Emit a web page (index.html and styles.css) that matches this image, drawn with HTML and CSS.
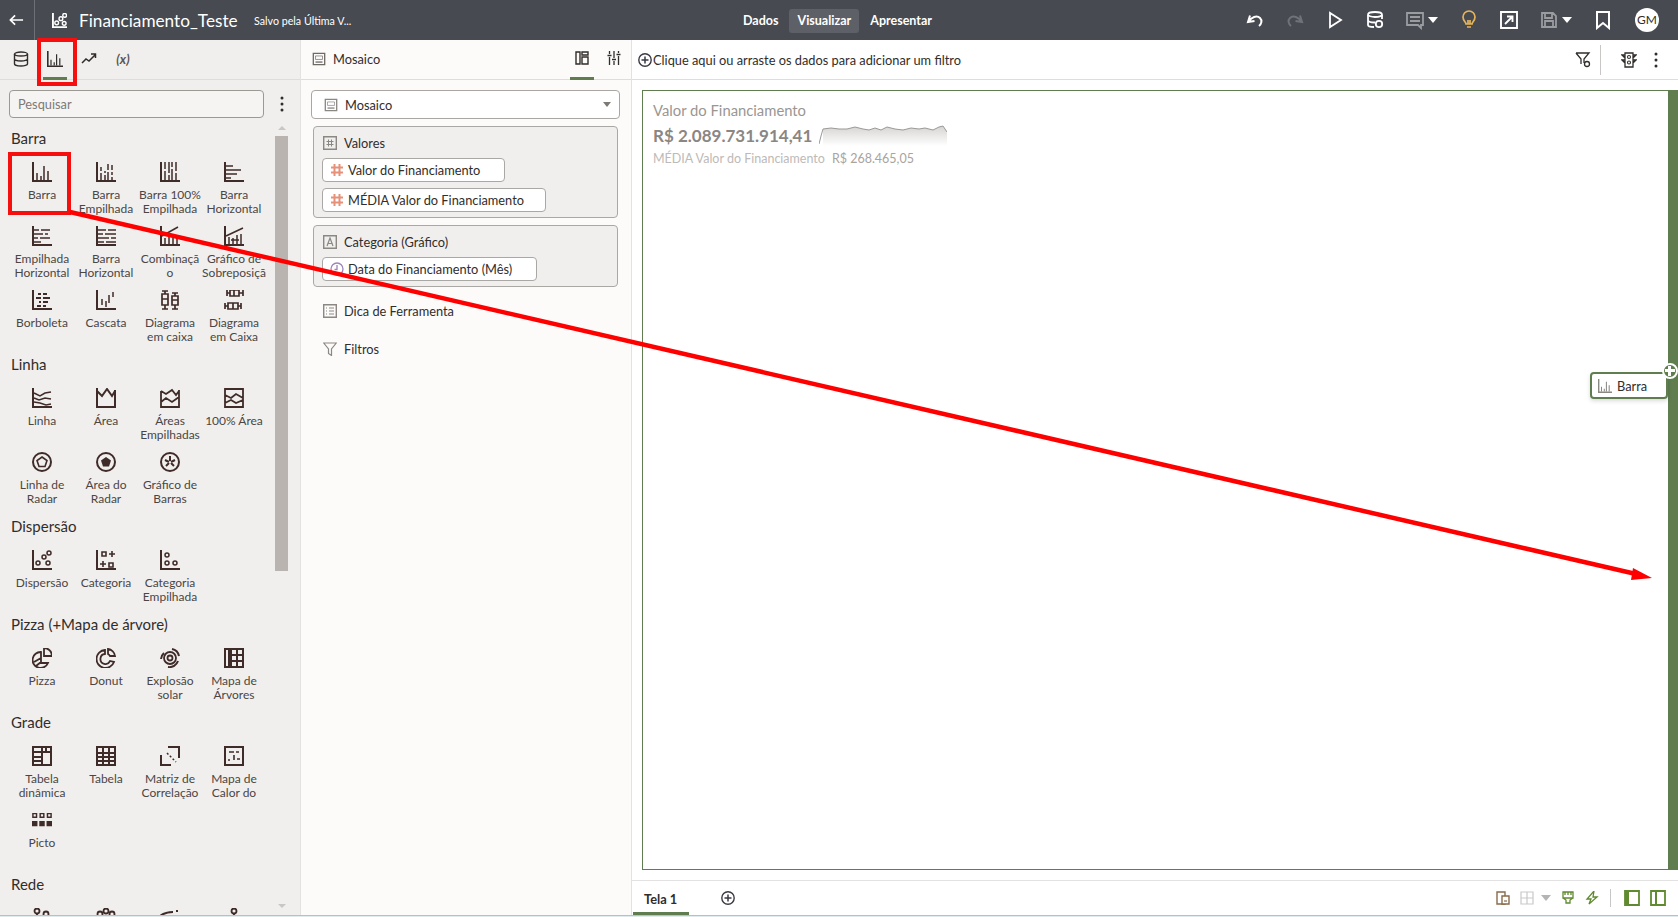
FILE: index.html
```html
<!DOCTYPE html>
<html lang="pt">
<head>
    <meta charset="UTF-8">
    <title>Financiamento_Teste</title>
    <link rel="stylesheet" href="styles.css">
</head>
<body>
<svg class="defs" width="0" height="0">
    <symbol id="i-bar" viewBox="0 0 20 20"><path d="M1 0v19h19" stroke-width="2"/><path d="M5 11v7M9 14v4M12 4v14M16 9v9" stroke-width="1.5"/></symbol>
    <symbol id="i-barstack" viewBox="0 0 20 20"><path d="M1 0v19h19" stroke-width="2"/><path d="M5 5v4M5 11v7M9 9v2M9 13v5M12 2v6M12 10v8M16 3v5M16 10v3M16 15v3" stroke-width="1.5"/></symbol>
    <symbol id="i-bar100" viewBox="0 0 20 20"><path d="M1 0v19h19" stroke-width="2"/><path d="M5 0v7M5 9v9M9 0v11M9 13v5M12 0v5M12 7v11M16 0v9M16 11v7" stroke-width="1.5"/></symbol>
    <symbol id="i-hbar" viewBox="0 0 20 20"><path d="M1 0v19h19" stroke-width="2"/><path d="M2 4h7M2 8h15M2 12h11M2 16h5" stroke-width="1.5"/></symbol>
    <symbol id="i-hstack" viewBox="0 0 20 20"><path d="M1 0v19h19" stroke-width="2"/><path d="M2 4h5M9 4h9M2 8h9M13 8h3M2 12h4M8 12h10M2 16h7" stroke-width="1.5"/></symbol>
    <symbol id="i-hstack2" viewBox="0 0 20 20"><path d="M1 0v19h19" stroke-width="2"/><path d="M2 4h8M12 4h8M2 8h5M9 8h11M2 12h11M15 12h5M2 16h6M10 16h10" stroke-width="1.5"/></symbol>
    <symbol id="i-combo" viewBox="0 0 20 20"><path d="M1 0v19h19" stroke-width="2"/><path d="M5 12v6M9 10v8M13 12v6M17 9v9" stroke-width="1.5"/><path d="M2 10 18 1" stroke-width="1.5"/></symbol>
    <symbol id="i-overlay" viewBox="0 0 20 20"><path d="M1 0v19h19" stroke-width="2"/><path d="M5 11v7M9 12v6M13 9v9M17 8v10M7 14h8" stroke-width="1.5"/><path d="M2 10 19 2" stroke-width="1.5"/></symbol>
    <symbol id="i-butterfly" viewBox="0 0 20 20"><path d="M1 0v19h19" stroke-width="2"/><path d="M6 4h3M11 4h4M4 8h5M11 8h7M7 12h2M11 12h5M5 16h4M11 16h3" stroke-width="1.8"/></symbol>
    <symbol id="i-waterfall" viewBox="0 0 20 20"><path d="M1 0v19h19" stroke-width="2"/><path d="M6 9v6M10 11v6M13 5v8M17 2v5" stroke-width="1.5"/></symbol>
    <symbol id="i-box" viewBox="0 0 20 20"><path d="M2 1h6M5 1v3M2 4h6v11H2zM2 9h6M2 19h6M5 15v4M12 3h6M15 3v3M12 6h6v9h-6zM12 10h6M12 19h6M15 15v4" stroke-width="1.7"/></symbol>
    <symbol id="i-hbox" viewBox="0 0 20 20"><path d="M3 0v6M3 3h3M6 0h9v6H6zM10 0v6M15 3h4M19 0v6M1 13v6M1 16h3M4 13h10v6H4zM9 13v6M14 16h3M17 13v6" stroke-width="1.7"/></symbol>
    <symbol id="i-line" viewBox="0 0 20 20"><path d="M1 0v19h19" stroke-width="2"/><path d="M2 5l6 3 5-3 6-1M2 10l5 2 6-2 6 1M2 14l6 1 6 2 5-1" stroke-width="1.5"/></symbol>
    <symbol id="i-area" viewBox="0 0 20 20"><path d="M1 0v19h18V2M1 3l5 5 5-7 5 7 3-5" stroke-width="2"/></symbol>
    <symbol id="i-areas" viewBox="0 0 20 20"><path d="M1 3v16h18V2M1 3l5 3 6-4 4 5 3-4M1 14l5-4 6 4 7-5" stroke-width="1.8"/></symbol>
    <symbol id="i-area100" viewBox="0 0 20 20"><path d="M1 1h18v18H1zM1 7l6 3 5-4 7 4M1 15l6-3 5 3 7-3" stroke-width="1.8"/></symbol>
    <symbol id="i-radar" viewBox="0 0 20 20"><circle cx="10" cy="10" r="9" stroke-width="2"/><path d="M10 5l5 3.6-2 5.9H7L5 8.600z" stroke-width="1.6"/></symbol>
    <symbol id="i-radar2" viewBox="0 0 20 20"><circle cx="10" cy="10" r="9" stroke-width="2"/><path d="M10 5l5 3.6-2 5.9H7L5 8.600z" fill="currentColor" stroke="none"/></symbol>
    <symbol id="i-radial" viewBox="0 0 20 20"><circle cx="10" cy="10" r="9" stroke-width="2"/><path d="M10 9V4M11 10l4-2M11 11l3 3M9 11l-3 3M9 10L5 8" stroke-width="2"/></symbol>
    <symbol id="i-scatter" viewBox="0 0 20 20"><path d="M1 0v19h19" stroke-width="2"/><circle cx="6" cy="13" r="2" stroke-width="1.5"/><circle cx="12" cy="7" r="2" stroke-width="1.5"/><circle cx="17" cy="3" r="2" stroke-width="1.500"/><circle cx="16" cy="13" r="2" stroke-width="1.500"/></symbol>
    <symbol id="i-category" viewBox="0 0 20 20"><path d="M1 0v19h19" stroke-width="2"/><path d="M6 2h4v4H6zM13 13h4v4h-4z" stroke-width="1.600"/><path d="M16 1v6M13 4h6M7 11v6M4 14h6" stroke-width="1.600"/></symbol>
    <symbol id="i-catstack" viewBox="0 0 20 20"><path d="M1 0v19h19" stroke-width="2"/><circle cx="7" cy="5" r="2" stroke-width="1.500"/><circle cx="7" cy="13" r="2" stroke-width="1.500"/><circle cx="15" cy="13" r="2" stroke-width="1.500"/></symbol>
    <symbol id="i-pie" viewBox="0 0 20 20"><path d="M9 4a8 8 0 1 0 7 11H9zM2 14l7-4M4 18l5-4" stroke-width="1.800"/><path d="M12 0a8 8 0 0 1 8 8h-8z" stroke-width="1.800"/></symbol>
    <symbol id="i-donut" viewBox="0 0 20 20"><path d="M9 2a9 9 0 1 0 9 12l-4-1a5 5 0 1 1-5-7zM12 1a8 8 0 0 1 7 7h-5a4 4 0 0 0-2-2z" stroke-width="1.800"/></symbol>
    <symbol id="i-sunburst" viewBox="0 0 20 20"><circle cx="10" cy="10" r="2.500" stroke-width="1.800"/><circle cx="10" cy="10" r="6" stroke-width="1.800"/><path d="M12 1a9 9 0 0 1 7 7M18 13a9 9 0 0 1-10 6M1 11a9 9 0 0 1 3-6" stroke-width="2"/></symbol>
    <symbol id="i-treemap" viewBox="0 0 20 20"><path d="M1 1h18v18H1zM7 1v18M5 1v18M7 7h12M13 1v6M7 13h12M13 7v12" stroke-width="2"/></symbol>
    <symbol id="i-pivot" viewBox="0 0 20 20"><path d="M1 1h18v18H1zM1 6h18M1 11h9M1 15h9M10 1v18M14 1v5" stroke-width="2"/></symbol>
    <symbol id="i-table" viewBox="0 0 20 20"><path d="M1 1h18v18H1zM1 7h18M1 11h18M1 15h18M7 1v18M13 1v18" stroke-width="2"/></symbol>
    <symbol id="i-corr" viewBox="0 0 20 20"><path d="M8 1h11v11M1 9v10h10" stroke-width="2"/><path d="M7 7l9 9" stroke-width="1.500" stroke-dasharray="2 2"/></symbol>
    <symbol id="i-heat" viewBox="0 0 20 20"><path d="M1 1h18v18H1z" stroke-width="2"/><path d="M5 6h5M12 6h3M10 9v5M13 13h3M4 14h2" stroke-width="1.600"/></symbol>
    <symbol id="i-picto" viewBox="0 0 22 16"><path d="M1 1h4v4H1zM9 1h4v4H9zM17 1h4v4h-4z" stroke-width="1.600"/><path d="M0 9h6v6H0zM8 9h6v6H8zM16 9h6v6h-6z" fill="currentColor" stroke="none"/></symbol>
    <symbol id="i-net1" viewBox="0 0 20 20"><circle cx="5" cy="3" r="2.500" stroke-width="1.800"/><circle cx="14" cy="6" r="2.500" stroke-width="1.800"/><path d="M5 5v6" stroke-width="1.800"/></symbol>
    <symbol id="i-net2" viewBox="0 0 20 20"><circle cx="4" cy="6" r="2.500" stroke-width="1.800"/><circle cx="10" cy="3" r="2.500" stroke-width="1.800"/><circle cx="16" cy="6" r="2.500" stroke-width="1.800"/></symbol>
    <symbol id="i-net3" viewBox="0 0 20 20"><path d="M0 8c4-3 8-4 13-4" stroke-width="2"/><path d="M17 2v2" stroke-width="2"/></symbol>
    <symbol id="i-net4" viewBox="0 0 20 20"><circle cx="10" cy="3" r="2.500" stroke-width="1.800"/><path d="M10 5v8" stroke-width="1.800"/></symbol>
    <symbol id="i-tile" viewBox="0 0 16 16"><path d="M1.500 1.500h13v13h-13z" stroke-width="1.500"/><path d="M4 11.500h8" stroke-width="1.500"/><path d="M4 4.500h8v4H4z" stroke-width=".8"/></symbol>
    <symbol id="i-hash" viewBox="0 0 14 14"><path d="M4.500 1v12M9.500 1v12M1 4.500h12M1 9.500h12" stroke-width="2"/></symbol>
    <symbol id="i-boxhash" viewBox="0 0 14 14"><path d="M.7.700h12.600v12.600H.7z" stroke-width="1.400"/><path d="M5.500 3.500v7M8.500 3.500v7M3.500 5.500h7M3.500 8.500h7" stroke-width="1"/></symbol>
    <symbol id="i-boxa" viewBox="0 0 14 14"><path d="M.7.700h12.600v12.600H.7z" stroke-width="1.400"/><path d="M4 11l3-8 3 8M5 8.500h4" stroke-width="1.200"/></symbol>
    <symbol id="i-boxlist" viewBox="0 0 14 14"><path d="M.7.700h12.600v12.600H.7z" stroke-width="1.400"/><path d="M3 4h1M6 4h5M3 7h1M6 7h5M3 10h1M6 10h5" stroke-width="1.100"/></symbol>
    <symbol id="i-funnel" viewBox="0 0 14 14"><path d="M.7 1h12.600L8.500 7v6.500l-3-2V7z" stroke-width="1.200"/></symbol>
    <symbol id="i-plus" viewBox="0 0 14 14"><circle cx="7" cy="7" r="6.200" stroke-width="1.400"/><path d="M3.500 7h7M7 3.500v7" stroke-width="1.500"/></symbol>
    <symbol id="i-kebab" viewBox="0 0 4 16"><circle cx="2" cy="2" r="1.500" fill="currentColor" stroke="none"/><circle cx="2" cy="8" r="1.500" fill="currentColor" stroke="none"/><circle cx="2" cy="14" r="1.500" fill="currentColor" stroke="none"/></symbol>
</svg>

<div class="app">
    <header class="topbar">
        <button class="back">
            <svg class="ico-back" viewBox="0 0 16 12"><path d="M15 6H2M6.500 1 1.500 6l5 5" /></svg>
        </button>
        <svg class="ico-doc" viewBox="0 0 16 16"><path d="M1 0v15h15" stroke-width="2"/><circle cx="5" cy="10.500" r="2" stroke-width="1.500"/><circle cx="9.500" cy="6" r="2" stroke-width="1.500"/><circle cx="13" cy="11" r="2" stroke-width="1.500"/><circle cx="13.500" cy="2.500" r="2" stroke-width="1.500"/></svg>
        <span class="doc-title">Financiamento_Teste</span>
        <span class="doc-saved">Salvo pela Última V...</span>
        <nav class="modes">
            <a>Dados</a>
            <a class="on">Visualizar</a>
            <a>Apresentar</a>
        </nav>
        <div class="tools">
            <svg class="tool" viewBox="0 0 20 20"><path d="M5 5.500 3 12l6.500-1M4 11.500C6 7 12 5 15 8c2.500 2.500 1.500 6-1 8" stroke-width="2"/></svg>
            <svg class="tool dim" viewBox="0 0 20 20"><path d="M15 5.500 17 12l-6.500-1M16 11.500C14 7 8 5 5 8c-2.500 2.500-1.500 6 1 8" stroke-width="2"/></svg>
            <svg class="tool" viewBox="0 0 20 20"><path d="M5 3v14l11-7z" stroke-width="1.800"/></svg>
            <svg class="tool" viewBox="0 0 20 20"><path d="M3 5v10c0 1.500 3 2 6 2M17 5v4M3 10c0 1.500 3 2.500 7 2.500" stroke-width="1.800"/><ellipse cx="10" cy="4.500" rx="7" ry="2.500" stroke-width="1.800"/><circle cx="14" cy="14" r="3.200" stroke-width="1.800"/></svg>
            <span class="tool-pair">
                <svg class="tool dim2" viewBox="0 0 20 20"><path d="M2 3h16v12h-2v3l-3-3H2zM5 7h10M5 11h10" stroke-width="1.800"/></svg>
                <i class="caret"></i>
            </span>
            <svg class="tool bulb" viewBox="0 0 20 20"><path d="M7 14c0-2-3-3-3-7a6 6 0 0 1 12 0c0 4-3 5-3 7zM8 17h4M9 14v-4M11 14v-4" stroke-width="1.700"/></svg>
            <svg class="tool" viewBox="0 0 20 20"><path d="M2 2h16v16H2z" stroke-width="1.900"/><path d="M6 14l7-7M8 6.500h5.500V12" stroke-width="1.900"/></svg>
            <span class="tool-pair save">
                <svg class="tool dim2" viewBox="0 0 20 20"><path d="M3 3h11l3 3v11H3zM6 3v5h7V3M6 17v-6h8v6" stroke-width="1.800"/></svg>
                <i class="caret"></i>
            </span>
            <svg class="tool book" viewBox="0 0 20 20"><path d="M4 2h12v16l-6-5-6 5z" stroke-width="2"/></svg>
            <span class="avatar">GM</span>
        </div>
    </header>

    <div class="work">
        <aside class="gallery">
            <div class="tabs">
                <span class="tab"><svg class="ico16" viewBox="0 0 16 16"><ellipse cx="8" cy="3" rx="6.500" ry="2" stroke-width="1.400"/><path d="M1.500 3v10c0 1 3 2 6.500 2s6.500-1 6.500-2V3M1.500 8c0 1 3 2 6.500 2s6.500-1 6.500-2" stroke-width="1.400"/></svg></span>
                <span class="tab on"><svg class="ico16" viewBox="0 0 20 20"><use href="#i-bar"/></svg></span>
                <span class="tab"><svg class="ico16" viewBox="0 0 16 16"><path d="M1 12l4-4 3 2 6-6M10 3h4.500v4" stroke-width="1.500"/></svg></span>
                <span class="tab fx">(x)</span>
            </div>
            <div class="search-row">
                <div class="search">Pesquisar</div>
                <svg class="kebab" viewBox="0 0 4 16"><use href="#i-kebab"/></svg>
            </div>
            <div class="gallery-body">
                <div class="list">
                    <h3>Barra</h3>
                    <div class="grid">
                        <div class="item"><svg viewBox="0 0 20 20"><use href="#i-bar"/></svg><span>Barra</span></div>
                        <div class="item"><svg viewBox="0 0 20 20"><use href="#i-barstack"/></svg><span>Barra Empilhada</span></div>
                        <div class="item"><svg viewBox="0 0 20 20"><use href="#i-bar100"/></svg><span>Barra 100% Empilhada</span></div>
                        <div class="item"><svg viewBox="0 0 20 20"><use href="#i-hbar"/></svg><span>Barra Horizontal</span></div>
                        <div class="item"><svg viewBox="0 0 20 20"><use href="#i-hstack"/></svg><span>Empilhada Horizontal</span></div>
                        <div class="item"><svg viewBox="0 0 20 20"><use href="#i-hstack2"/></svg><span>Barra Horizontal</span></div>
                        <div class="item"><svg viewBox="0 0 20 20"><use href="#i-combo"/></svg><span>Combinação</span></div>
                        <div class="item"><svg viewBox="0 0 20 20"><use href="#i-overlay"/></svg><span>Gráfico de Sobreposiçã</span></div>
                        <div class="item"><svg viewBox="0 0 20 20"><use href="#i-butterfly"/></svg><span>Borboleta</span></div>
                        <div class="item"><svg viewBox="0 0 20 20"><use href="#i-waterfall"/></svg><span>Cascata</span></div>
                        <div class="item"><svg viewBox="0 0 20 20"><use href="#i-box"/></svg><span>Diagrama em caixa</span></div>
                        <div class="item"><svg viewBox="0 0 20 20"><use href="#i-hbox"/></svg><span>Diagrama em Caixa</span></div>
                    </div>
                    <h3>Linha</h3>
                    <div class="grid">
                        <div class="item"><svg viewBox="0 0 20 20"><use href="#i-line"/></svg><span>Linha</span></div>
                        <div class="item"><svg viewBox="0 0 20 20"><use href="#i-area"/></svg><span>Área</span></div>
                        <div class="item"><svg viewBox="0 0 20 20"><use href="#i-areas"/></svg><span>Áreas Empilhadas</span></div>
                        <div class="item"><svg viewBox="0 0 20 20"><use href="#i-area100"/></svg><span>100% Área</span></div>
                        <div class="item"><svg viewBox="0 0 20 20"><use href="#i-radar"/></svg><span>Linha de Radar</span></div>
                        <div class="item"><svg viewBox="0 0 20 20"><use href="#i-radar2"/></svg><span>Área do Radar</span></div>
                        <div class="item"><svg viewBox="0 0 20 20"><use href="#i-radial"/></svg><span>Gráfico de Barras</span></div>
                    </div>
                    <h3>Dispersão</h3>
                    <div class="grid">
                        <div class="item"><svg viewBox="0 0 20 20"><use href="#i-scatter"/></svg><span>Dispersão</span></div>
                        <div class="item"><svg viewBox="0 0 20 20"><use href="#i-category"/></svg><span>Categoria</span></div>
                        <div class="item"><svg viewBox="0 0 20 20"><use href="#i-catstack"/></svg><span>Categoria Empilhada</span></div>
                    </div>
                    <h3>Pizza (+Mapa de árvore)</h3>
                    <div class="grid">
                        <div class="item"><svg viewBox="0 0 20 20"><use href="#i-pie"/></svg><span>Pizza</span></div>
                        <div class="item"><svg viewBox="0 0 20 20"><use href="#i-donut"/></svg><span>Donut</span></div>
                        <div class="item"><svg viewBox="0 0 20 20"><use href="#i-sunburst"/></svg><span>Explosão solar</span></div>
                        <div class="item"><svg viewBox="0 0 20 20"><use href="#i-treemap"/></svg><span>Mapa de Árvores</span></div>
                    </div>
                    <h3>Grade</h3>
                    <div class="grid">
                        <div class="item"><svg viewBox="0 0 20 20"><use href="#i-pivot"/></svg><span>Tabela dinâmica</span></div>
                        <div class="item"><svg viewBox="0 0 20 20"><use href="#i-table"/></svg><span>Tabela</span></div>
                        <div class="item"><svg viewBox="0 0 20 20"><use href="#i-corr"/></svg><span>Matriz de Correlação</span></div>
                        <div class="item"><svg viewBox="0 0 20 20"><use href="#i-heat"/></svg><span>Mapa de Calor do</span></div>
                        <div class="item"><svg viewBox="0 0 22 16"><use href="#i-picto"/></svg><span>Picto</span></div>
                    </div>
                    <h3>Rede</h3>
                    <div class="grid">
                        <div class="item"><svg viewBox="0 0 20 20"><use href="#i-net1"/></svg></div>
                        <div class="item"><svg viewBox="0 0 20 20"><use href="#i-net2"/></svg></div>
                        <div class="item"><svg viewBox="0 0 20 20"><use href="#i-net3"/></svg></div>
                        <div class="item"><svg viewBox="0 0 20 20"><use href="#i-net4"/></svg></div>
                    </div>
                </div>
                <div class="scroller">
                    <i class="arrow up"></i>
                    <div class="thumb"></div>
                    <i class="arrow down"></i>
                </div>
            </div>
        </aside>

        <section class="grammar">
            <div class="grammar-head">
                <svg class="ico14" viewBox="0 0 16 16"><use href="#i-tile"/></svg>
                <span class="grammar-name">Mosaico</span>
                <span class="g-tab on"><svg class="ico14" viewBox="0 0 14 14"><path d="M1 1h4v12H1zM7 1h6v3H7zM7 6h6v7H7z" stroke-width="1.400"/></svg></span>
                <span class="g-tab"><svg class="ico14" viewBox="0 0 14 14"><path d="M2.500 0v3M2.500 6v8M7 0v7M7 10v4M11.500 0v2M11.500 5v9M.5 4.500h4M5 8.500h4M9.500 3.500h4" stroke-width="1.300"/></svg></span>
            </div>
            <div class="grammar-body">
                <div class="select">
                    <svg class="ico14 grey" viewBox="0 0 16 16"><use href="#i-tile"/></svg>
                    <span>Mosaico</span>
                    <i class="caret dark"></i>
                </div>
                <div class="well">
                    <div class="well-title"><svg class="ico14 grey" viewBox="0 0 14 14"><use href="#i-boxhash"/></svg>Valores</div>
                    <div class="pill w1"><svg class="hash" viewBox="0 0 14 14"><use href="#i-hash"/></svg>Valor do Financiamento</div>
                    <div class="pill w2"><svg class="hash" viewBox="0 0 14 14"><use href="#i-hash"/></svg>MÉDIA Valor do Financiamento</div>
                </div>
                <div class="well">
                    <div class="well-title"><svg class="ico14 grey" viewBox="0 0 14 14"><use href="#i-boxa"/></svg>Categoria (Gráfico)</div>
                    <div class="pill w3"><svg class="clock" viewBox="0 0 14 14"><circle cx="7" cy="7" r="6" stroke-width="1.300"/><path d="M7 3v4.500h-2.500" stroke-width="1.300"/></svg>Data do Financiamento (Mês)</div>
                </div>
                <div class="slot"><svg class="ico14 grey" viewBox="0 0 14 14"><use href="#i-boxlist"/></svg>Dica de Ferramenta</div>
                <div class="slot"><svg class="ico14 grey" viewBox="0 0 14 14"><use href="#i-funnel"/></svg>Filtros</div>
            </div>
        </section>

        <main class="stage">
            <div class="filterbar">
                <svg class="ico14 dark" viewBox="0 0 14 14"><use href="#i-plus"/></svg>
                <span class="filter-hint">Clique aqui ou arraste os dados para adicionar um filtro</span>
                <svg class="ico16 filter-ico" viewBox="0 0 16 16"><path d="M1 1h13L9 7v4M6 12V7L1 1" stroke-width="1.300"/><circle cx="12" cy="12" r="2.500" stroke-width="1.300"/></svg>
                <span class="vsep"></span>
                <svg class="ico16 light-ico" viewBox="0 0 16 16"><path d="M4 1h8v14H4zM4 3H1l3 3M4 8H1l3 3M12 3h3l-3 3M12 8h3l-3 3" stroke-width="1.300"/><circle cx="8" cy="5" r="1.500" stroke-width="1.100"/><circle cx="8" cy="10.500" r="1.500" stroke-width="1.100"/></svg>
                <svg class="kebab" viewBox="0 0 4 16"><use href="#i-kebab"/></svg>
            </div>
            <div class="canvas-wrap">
                <div class="canvas">
                    <div class="tile-label">Valor do Financiamento</div>
                    <div class="tile-row">
                        <span class="tile-value">R$ 2.089.731.914,41</span>
                        <svg class="spark" viewBox="0 0 128 22" preserveAspectRatio="none">
                            <defs>
                                <linearGradient id="sparkfill" x1="0" y1="0" x2="0" y2="1">
                                    <stop offset="0" stop-color="#d6d4d2"/>
                                    <stop offset="1" stop-color="#ffffff"/>
                                </linearGradient>
                            </defs>
                            <path class="spark-area" d="M4 5 12 4 20 5 28 5 36 3 44 5 50 6 56 4 62 6 68 3 76 5 84 6 92 4 100 5 106 4 114 6 120 3 124 2 128 8V22H4Z"/>
                            <path class="spark-line" d="M0 20 2 12 4 5 12 4 20 5 28 5 36 3 44 5 50 6 56 4 62 6 68 3 76 5 84 6 92 4 100 5 106 4 114 6 120 3 124 2 128 8"/>
                        </svg>
                    </div>
                    <div class="tile-sub"><span>MÉDIA Valor do Financiamento</span><b>R$ 268.465,05</b></div>
                    <div class="drop-hint">
                        <svg class="ico14 grey" viewBox="0 0 20 20"><use href="#i-bar"/></svg>
                        Barra
                        <span class="drop-plus"></span>
                    </div>
                </div>
            </div>
            <div class="sheetbar">
                <span class="sheet">Tela 1</span>
                <svg class="ico14 dark sheet-add" viewBox="0 0 14 14"><use href="#i-plus"/></svg>
                <div class="sheet-tools">
                    <svg class="ico14 multi" viewBox="0 0 14 14"><path d="M1 1h8v12H1z" stroke-width="1.400"/><path d="M6 5h7v8H6z" stroke-width="1.400" fill="#fff"/><path d="M8 10h3" stroke-width="1.200"/></svg>
                    <svg class="ico14 faint" viewBox="0 0 14 14"><path d="M1 1h12v12H1zM7 1v12M1 7h12" stroke-width="1.200"/></svg>
                    <i class="caret faint-caret"></i>
                    <svg class="ico14 green" viewBox="0 0 14 14"><path d="M2 1h10v6H2zM4 1v3M7 1v3M10 1v3M2 7l3 2v3h4V9l3-2" stroke-width="1.300"/></svg>
                    <svg class="ico14 green" viewBox="0 0 14 14"><path d="M9 0 2 8h4L4 13l8-7H8z" stroke-width="1.300"/></svg>
                    <span class="vsep short"></span>
                    <svg class="ico16 green" viewBox="0 0 16 16"><path d="M1 1h14v14H1z" stroke-width="1.800"/><path d="M1 1h4v14H1z" fill="currentColor" stroke="none"/></svg>
                    <svg class="ico16 green" viewBox="0 0 16 16"><path d="M1 1h14v14H1z" stroke-width="1.800"/><path d="M6 1v14" stroke-width="2"/></svg>
                </div>
            </div>
        </main>
    </div>
    <div class="strip"></div>
</div>

<svg class="marks" viewBox="0 0 1678 917">
    <rect x="39" y="40" width="36" height="44"/>
    <rect x="10" y="154" width="59" height="59"/>
    <path class="shaft" d="M70 212 1636 574"/>
    <path class="head" d="M1652 578 1633 568 1631 580Z"/>
</svg>
</body>
</html>
```

FILE: styles.css
```css
* {
  box-sizing: border-box;
}

html, body {
  margin: 0;
  height: 100%;
  overflow: hidden;
}

body {
  font-family: "Lato", "Open Sans", sans-serif;
  font-size: 12.800px;
  color: #312d2a;
  background: #fff;
  position: relative;
}

svg {
  fill: none;
  stroke: currentColor;
  flex: none;
}

.defs {
  position: absolute;
}

.app {
  height: 917px;
  display: flex;
  flex-direction: column;
}

/* top bar */
.topbar {
  height: 40px;
  background: #474a51;
  color: #fff;
  display: flex;
  align-items: center;
  flex: none;
}

.back {
  width: 35px;
  height: 40px;
  padding: 0 0 0 9px;
  background: none;
  border: 0;
  border-right: 1px solid #6d7076;
  color: #fff;
  display: flex;
  align-items: center;
}

.ico-back {
  width: 15px;
  height: 12px;
  stroke-width: 1.800;
}

.ico-doc {
  width: 15px;
  height: 15px;
  margin-left: 17px;
}

.doc-title {
  font-size: 17.200px;
  margin-left: 12px;
  width: 175px;
}

.doc-saved {
  font-size: 10.700px;
}

.modes {
  display: flex;
  align-items: center;
  gap: 3px;
  position: absolute;
  left: 735px;
  top: 9px;
}

.modes a {
  font-size: 12.500px;
  font-weight: 700;
  height: 24px;
  line-height: 24px;
  padding: 0 8px;
  border-radius: 3px;
}

.modes .on {
  background: #5d6066;
}

.tools {
  margin-left: auto;
  display: flex;
  align-items: center;
  gap: 20px;
  padding-right: 19px;
}

.tool {
  width: 20px;
  height: 20px;
}

.tool.dim {
  color: #6f7278;
}

.tool.dim2 {
  color: #9a9ca0;
}

.tool.bulb {
  color: #e5b55b;
}

.tool-pair {
  display: flex;
  align-items: center;
  gap: 3px;
  margin-right: 1px;
}

.caret {
  display: block;
  width: 0;
  height: 0;
  border-left: 5px solid transparent;
  border-right: 5px solid transparent;
  border-top: 6px solid #fff;
}

.avatar {
  width: 24px;
  height: 24px;
  margin-left: 2px;
  border-radius: 50%;
  background: #fff;
  color: #312d2a;
  font-size: 12px;
  line-height: 24px;
  text-align: center;
}

/* three columns */
.work {
  flex: 1;
  min-height: 0;
  display: flex;
}

.strip {
  height: 2px;
  background: #dcecef;
  border-top: 1px solid #b4c2c6;
  flex: none;
}

.ico14 {
  width: 14px;
  height: 14px;
}

.ico16 {
  width: 16px;
  height: 16px;
}

.kebab {
  width: 4px;
  height: 16px;
}

/* left gallery */
.gallery {
  width: 301px;
  flex: none;
  background: #f1efed;
  border-right: 1px solid #e4e2e0;
  display: flex;
  flex-direction: column;
}

.tabs {
  height: 40px;
  flex: none;
  display: flex;
  padding-left: 4px;
  border-bottom: 1px solid #dfdddb;
}

.tab {
  width: 34px;
  display: flex;
  align-items: center;
  justify-content: center;
  margin-bottom: -1px;
  padding-bottom: 2px;
}

.tab.on {
  border-bottom: 3px solid #5f7d4f;
  margin: 0 5px -1px;
  width: 24px;
  padding-bottom: 0;
}

.tab.fx {
  font-style: italic;
  font-size: 13px;
  font-weight: 700;
  color: #5b5652;
}

.search-row {
  flex: none;
  display: flex;
  align-items: center;
  padding: 10px 0 4px 9px;
}

.search {
  width: 255px;
  height: 28px;
  line-height: 26px;
  padding-left: 8px;
  background: #f5f4f2;
  border: 1px solid #9c9894;
  border-radius: 4px;
  color: #7d7975;
}

.search-row .kebab {
  margin-left: 16px;
  color: #312d2a;
}

.gallery-body {
  flex: 1;
  min-height: 0;
  display: flex;
}

.list {
  width: 275px;
  padding-left: 10px;
  overflow: hidden;
}

.list h3 {
  margin: 0;
  height: 34px;
  line-height: 33px;
  padding-left: 1px;
  font-size: 15px;
  font-weight: 400;
}

.grid {
  display: grid;
  grid-template-columns: repeat(4, 64px);
  grid-auto-rows: 64px;
}

.item {
  display: flex;
  flex-direction: column;
  align-items: center;
  padding-top: 6px;
  color: #3f2b28;
  overflow: hidden;
}

.item svg {
  width: 20px;
  height: 20px;
}

.item span {
  margin-top: 6px;
  width: 64px;
  max-height: 28px;
  overflow: hidden;
  overflow-wrap: anywhere;
  text-align: center;
  font-size: 12px;
  line-height: 14px;
  color: #4a4644;
}

.scroller {
  width: 13px;
  display: flex;
  flex-direction: column;
  align-items: center;
  padding-top: 4px;
}

.thumb {
  width: 13px;
  height: 435px;
  margin-top: 6px;
  background: #b9b4b0;
}

.arrow {
  display: block;
  width: 0;
  height: 0;
  border-left: 4px solid transparent;
  border-right: 4px solid transparent;
}

.arrow.up {
  border-bottom: 4px solid #c9c6c3;
}

.arrow.down {
  border-top: 4px solid #c9c6c3;
  margin-top: auto;
  margin-bottom: 7px;
}

/* middle column */
.grammar {
  width: 331px;
  flex: none;
  background: #fcfbfa;
  border-right: 1px solid #e4e2e0;
}

.grammar-head {
  height: 40px;
  display: flex;
  align-items: center;
  padding-left: 11px;
  border-bottom: 1px solid #dfdddb;
}

.grammar-head > .ico14 {
  color: #6e6a66;
  margin-bottom: 2px;
}

.grammar-name {
  margin-left: 7px;
  margin-right: auto;
  margin-bottom: 2px;
}

.g-tab {
  width: 24px;
  height: 40px;
  display: flex;
  align-items: center;
  justify-content: center;
  margin-right: 8px;
  padding-bottom: 4px;
}

.g-tab:last-child {
  margin-right: 5px;
}

.g-tab.on {
  border-bottom: 3px solid #5f7d4f;
  padding-bottom: 1px;
}

.grammar-body {
  padding: 10px 11px 0 10px;
}

.select {
  height: 29px;
  display: flex;
  align-items: center;
  gap: 7px;
  padding: 0 8px 0 12px;
  background: #fff;
  border: 1px solid #a9a6a3;
  border-radius: 4px;
}

.caret.dark {
  margin-left: auto;
  border-top-color: #7d7975;
  border-left-width: 4px;
  border-right-width: 4px;
  border-top-width: 5px;
}

.grey {
  color: #8b8783;
}

.well {
  margin: 7px 2px 0;
  padding: 8px 8px 5px;
  background: #f0efee;
  border: 1px solid #aaa8a5;
  border-radius: 4px;
}

.well-title {
  display: flex;
  align-items: center;
  gap: 7px;
  height: 16px;
  margin-left: 1px;
}

.pill {
  height: 24px;
  margin-top: 6px;
  display: flex;
  align-items: center;
  padding-left: 7px;
  gap: 4px;
  background: #fff;
  border: 1px solid #aaa8a5;
  border-radius: 4px;
}

.pill svg {
  width: 14px;
  height: 14px;
}

.well-title + .pill {
  margin-top: 7px;
}

.w1 {
  width: 183px;
}

.w2 {
  width: 224px;
}

.w3 {
  width: 215px;
}

.hash {
  color: #e8917a;
}

.clock {
  color: #9a86b8;
}

.slot {
  display: flex;
  align-items: center;
  gap: 7px;
  height: 38px;
  padding-left: 12px;
}

.well + .slot {
  margin-top: 5px;
}

/* main area */
.stage {
  flex: 1;
  min-width: 0;
  display: flex;
  flex-direction: column;
}

.filterbar {
  height: 40px;
  flex: none;
  display: flex;
  align-items: center;
  padding: 0 20px 0 6px;
  border-bottom: 1px solid #dfdddb;
}

.filter-hint {
  margin-left: 1px;
  margin-right: auto;
}

.filter-ico {
  margin-right: 9px;
}

.vsep {
  width: 1px;
  height: 30px;
  background: #c9c7c5;
}

.light-ico {
  margin-left: 20px;
  margin-right: 17px;
}

.canvas-wrap {
  flex: 1;
  min-height: 0;
  padding: 10px 0 10px 10px;
}

.canvas {
  position: relative;
  height: 100%;
  padding: 10px 10px;
  border: 1px solid #5f7d4f;
  border-right: 10px solid #5f7d4f;
}

.tile-label {
  font-size: 14.800px;
  line-height: 18px;
  color: #9a9692;
}

.tile-row {
  display: flex;
  align-items: center;
  height: 26px;
  margin-top: 3px;
}

.tile-value {
  font-size: 17px;
  font-weight: 700;
  color: #8a8683;
}

.spark {
  width: 128px;
  height: 22px;
  margin-left: 7px;
  stroke: none;
}

.spark-area {
  fill: url(#sparkfill);
  stroke: none;
}

.spark-line {
  fill: none;
  stroke: #9b9997;
  stroke-width: 1;
}

.tile-sub {
  margin-top: 3px;
  font-size: 12.500px;
  color: #bdbab7;
}

.tile-sub b {
  font-weight: 400;
  color: #a8a4a0;
  margin-left: 7px;
}

.drop-hint {
  position: absolute;
  right: 0;
  top: 281px;
  width: 78px;
  height: 27px;
  display: flex;
  align-items: center;
  gap: 5px;
  padding-left: 6px;
  color: #312d2a;
  background: #fff;
  border: 2px solid #5f7d4f;
  border-radius: 4px;
  box-shadow: 0 2px 4px rgba(0, 0, 0, .15);
}

.drop-plus {
  position: absolute;
  right: -12px;
  top: -11px;
  width: 16px;
  height: 16px;
  border-radius: 50%;
  background: #5f7d4f;
  border: 2px solid #fff;
}

.drop-plus::before,
.drop-plus::after {
  content: "";
  position: absolute;
  background: #fff;
}

.drop-plus::before {
  left: 1px;
  top: 4px;
  width: 10px;
  height: 3px;
}

.drop-plus::after {
  left: 4px;
  top: 1px;
  width: 3px;
  height: 10px;
}

.sheetbar {
  height: 35px;
  flex: none;
  display: flex;
  align-items: center;
  padding-left: 1px;
  border-top: 1px solid #e2e2e2;
}

.sheet {
  width: 56px;
  height: 34px;
  line-height: 36px;
  padding-left: 11px;
  font-weight: 700;
  border-bottom: 3px solid #5f7d4f;
}

.dark {
  color: #3a3a44;
}

.sheet-add {
  margin-left: 32px;
}

.sheet-tools {
  margin-left: auto;
  display: flex;
  align-items: center;
  gap: 10px;
  padding-right: 12px;
}

.multi {
  color: #8a6b4a;
}

.faint {
  color: #c9c9c9;
}

.caret.faint-caret {
  border-top-color: #b4b4b4;
  margin-left: -3px;
}

.green {
  color: #5f8a2f;
}

.vsep.short {
  height: 18px;
  margin: 0 3px 0 1px;
}

/* red annotation drawn over the screenshot */
.marks {
  position: absolute;
  left: 0;
  top: 0;
  width: 1678px;
  height: 917px;
  stroke: none;
  pointer-events: none;
}

.marks rect {
  fill: none;
  stroke: #f50f0f;
  stroke-width: 4;
}

.marks .shaft {
  stroke: #fe0000;
  stroke-width: 4.500;
}

.marks .head {
  fill: #fe0000;
}
```
